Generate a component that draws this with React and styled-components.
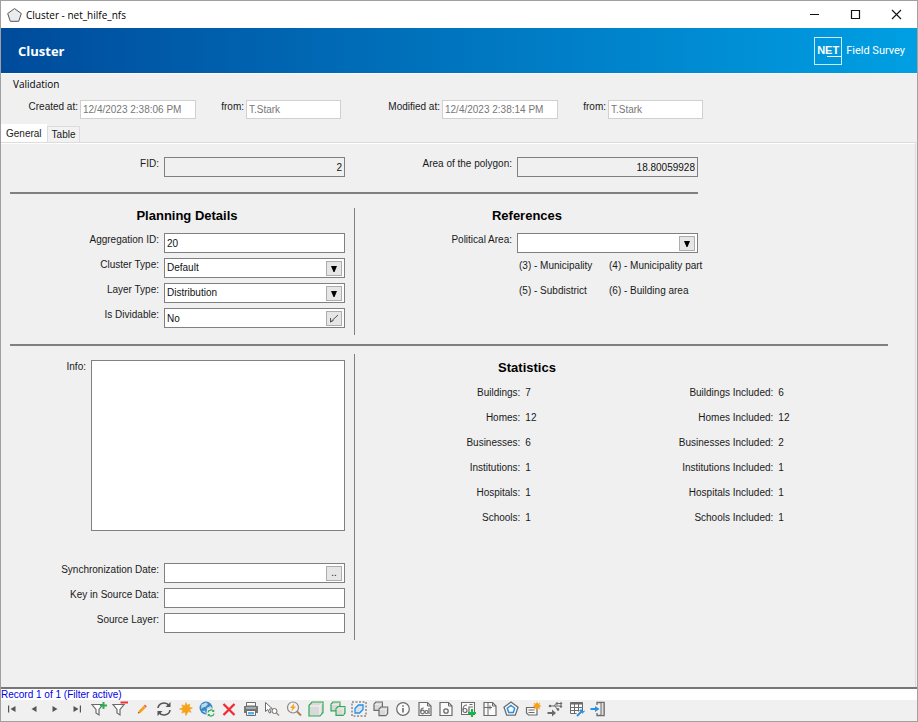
import React, { useState } from 'react'
import styled, { createGlobalStyle } from 'styled-components'

const GlobalStyle = createGlobalStyle`
    * {
        box-sizing: border-box;
    }
    body {
        margin: 0;
        background: #f0f0f0;
        color: #1a1a1a;
        font-family: "Liberation Sans", Arial, sans-serif;
        font-size: 10px;
        line-height: 12px;
    }
    button, input, select, textarea {
        margin: 0;
        padding: 0;
        border: none;
        border-radius: 0;
        outline: none;
        background: transparent;
        color: inherit;
        font: inherit;
    }
`

const gray = '#6b6b6b'
const green = '#2faa55'
const blue = '#2b8fe0'
const orange = '#f7a11b'

const Funnel = () => <path d="M2 4.5h11L9 9.5V15l-3-2V9.5z" fill="#fff" stroke={gray} strokeWidth="1.2" />
const Page = () => (
    <>
        <path d="M3 2.5h8.5l3.5 3.5v9.5H3z" fill="#fafafa" stroke={gray} strokeWidth="1.2" />
        <path d="M11.5 2.5V6H15" fill="none" stroke={gray} />
    </>
)
const Cube = ({ x, y, s, line, fill = '#d9d9d9' }) => (
    <g transform={`translate(${x} ${y}) scale(${s})`} stroke={line} strokeLinejoin="miter">
        <path d="M0 3.5L3 0h11v10.5L11 14H0z" fill={fill} strokeWidth={1.2 / s} />
        <path d="M1 4H11L13.2 1.2M11 4V13" fill="none" stroke="#f8f8f8" strokeWidth="1" />
    </g>
)
const Loop = ({ color, width }) => (
    <g fill="none" stroke={color} strokeWidth={width}>
        <path d="M3 8a6 5.5 0 0 1 11-2.5M15 10a6 5.5 0 0 1-11 2.5" />
        <path d="M15.5 2v5h-5zM2.5 16v-5h5z" fill={color} stroke="none" />
    </g>
)

const tools = [
    ['First record', <path d="M5 5.500h1.200v7H5zM12.500 6v6L7.500 9z" fill="#555" />],
    ['Previous record', <path d="M11.500 6v6L6.500 9z" fill="#555" />],
    ['Next record', <path d="M6.500 6v6L11.500 9z" fill="#555" />],
    ['Last record', <path d="M5.500 6v6L10.500 9zM11.800 5.500H13v7h-1.200z" fill="#555" />],
    ['Add filter', <><Funnel /><path d="M13.500 2v7M10 5.500h7" stroke={green} strokeWidth="2" /></>],
    ['Remove filter', <><Funnel /><path d="M9.500 2.500h7.500" stroke="#f0323c" strokeWidth="2" /></>],
    ['Edit', <><path d="M5 13.500l.8-2.700 5.200-5.200 1.900 1.900-5.200 5.200z" fill={orange} /><path d="M11 5.600l1-1 1.900 1.900-1 1z" fill="#e8555b" /><path d="M5 13.500l.5-1.700 1.200 1.200z" fill="#555" /></>],
    ['Refresh', <Loop color="#555" width="1.6" />],
    ['New', <path d="M9 2.500l1.200 2.800 2.700-1.200-.8 2.900 3.400 1-3 1.400 1.700 2.900-3-.7L9 15.500l-1.200-3.600-3 1.200 1.200-2.900-3.500-1.200 3.500-1.200-1.200-3 3 1.200z" fill={orange} stroke={orange} strokeWidth=".6" />],
    ['Web map', <><circle cx="8" cy="8" r="6.500" fill="#3a87c4" /><path d="M3.500 4.500L8 2.500l2 1.500-2 2.500-3 1-2 1.500zM8.500 8l4-2 1.500 2-2 2.500-3-.5zM4 11l3-.5 1 3z" fill="#b8dcec" /><rect x="8.500" y="8.500" width="9" height="9" rx="4" fill="#f0f0f0" /><g transform="translate(8.500 8.500) scale(.5)"><Loop color={green} width="2.500" /></g></>],
    ['Delete', <path d="M3.500 4l11 11M14.500 4l-11 11" stroke="#ef2b33" strokeWidth="2.300" />],
    ['Print', <><path d="M4.500 2.500h9V6h-9z" fill="#fff" stroke={gray} /><path d="M2 6h14v7H2z" fill="#777" /><path d="M4 8h10" stroke="#ddd" /><path d="M4.500 10.500h9v5h-9z" fill="#fff" stroke={gray} /><path d="M6 12h6v2.500H6z" fill="#5ab0ea" /></>],
    ['Identify', <><path d="M2.500 2.500v9l2.300-2 1.600 3.600 1.600-.8L6.400 9l3-.2z" fill="#fff" stroke={gray} /><circle cx="11.500" cy="11" r="2.500" fill="#fff" stroke={gray} /><path d="M13.300 12.800l2.700 2.700" stroke="#a88970" strokeWidth="1.500" /></>],
    ['Quick search', <><circle cx="8" cy="7.500" r="5.500" fill="#f4f4f4" stroke="#888" strokeWidth="1.200" /><path d="M9.500 3L5 8h2.500L6 12l5-5.500H8.500z" fill={orange} /><path d="M12 11.500l4 4" stroke="#a87f5c" strokeWidth="2" /></>],
    ['Feature', <Cube x={2} y={2} s={1} line={green} />],
    ['Copy feature', <><Cube x={2} y={2} s={0.64} line={green} /><Cube x={7} y={6.5} s={0.64} line={green} /></>],
    ['Select feature', <><rect x="2" y="2" width="14" height="14" fill="none" stroke="#555" strokeDasharray="2 1.5" /><path d="M5 8.500L8.500 5H13v4.500L9.500 13H5z" fill="#d5e4ee" stroke={blue} strokeWidth="1.300" /></>],
    ['Group', <><Cube x={2} y={2} s={0.6} line={gray} /><Cube x={7} y={7} s={0.62} line={gray} /></>],
    ['Info', <><circle cx="9" cy="9" r="6.300" fill="#fafafa" stroke={gray} strokeWidth="1.200" /><path d="M9 8v4.500M9 5.200v1.500" stroke={gray} strokeWidth="1.600" /></>],
    ['Report', <><Page /><g fill="none" stroke={gray} strokeWidth="1.200"><circle cx="6.500" cy="12" r="1.800" /><path d="M4.800 11.500c0-3 1-3.500 3-3.500" /><circle cx="10.500" cy="12" r="1.500" /><path d="M13 8v6" /></g></>],
    ['Object report', <><Page /><circle cx="9" cy="11" r="2.200" fill="none" stroke={gray} strokeWidth="1.300" /></>],
    ['Add view', <><rect x="2.500" y="2.500" width="13" height="12" fill="#fafafa" stroke={gray} /><g fill="none" stroke={gray} strokeWidth="1.200"><circle cx="6" cy="10.500" r="2" /><path d="M4 10C4 6 5 5 8 5M10 13V7h4M10.500 4.500h3" /></g><path d="M13 9v8M9 13h8" stroke="#17b84a" strokeWidth="2.200" /></>],
    ['Layout', <><Page /><path d="M7 2.500v13M3 7.500h8M9 5.500v4" fill="none" stroke={gray} /></>],
    ['Polygon', <><path d="M9 2l7 5.200-2.700 8H4.700L2 7.200z" fill="#fafafa" stroke={gray} strokeWidth="1.300" /><path d="M9 5.500l3.700 2.700-1.400 4.300H6.700L5.300 8.200z" fill="#fff" stroke={blue} strokeWidth="1.500" /></>],
    ['New label', <><path d="M2.500 7.500H13v7.500H4.500l-2-2z" fill="#fafafa" stroke={gray} strokeWidth="1.200" /><path d="M4.500 10h6M4.500 12.500h6" stroke={gray} /><path d="M13 1.500l1 2.200 2.300-.9-.9 2.200 2.100 1-2.100 1 .9 2.200-2.300-.9-1 2.200-1-2.200-2.300.9.900-2.200-2.100-1 2.100-1-.9-2.200 2.300.9z" fill={orange} /></>],
    ['Trace', <><path d="M1.500 13h5.500" stroke={gray} strokeWidth="2" /><path d="M6 9.500l4 3.500-4 3.500z" fill={gray} /><path d="M4 6h11M8 6l2-2.500h4M9 6l2 3h2" fill="none" stroke={gray} /><g fill={gray}><circle cx="4" cy="6" r="1.300" /><circle cx="11" cy="3.500" r="1.200" /><circle cx="15" cy="3.500" r="1.200" /><circle cx="15" cy="6.500" r="1.200" /><circle cx="12" cy="9.500" r="1.300" /></g></>],
    ['Table settings', <><path d="M2.500 2.500h12v11h-12z" fill="#fafafa" stroke={gray} /><path d="M2.500 3.500h12" stroke={gray} strokeWidth="2" /><path d="M2.500 7.500h12M2.500 10.500h12M6.500 3v10.500M10.500 3v10.500" stroke={gray} /><path d="M8.500 16.500l5-5" stroke="#f0f0f0" strokeWidth="4" /><path d="M9 16l5-5" stroke={blue} strokeWidth="1.800" /><path d="M13 8.500a2.500 2.500 0 0 0 .5 4 2.500 2.500 0 0 0 3.500-2l-2 .8-1.200-1.200z" fill={blue} /></>],
    ['Close form', <><path d="M8 5V2.500h7v13H8V13" fill="none" stroke={gray} strokeWidth="1.300" /><path d="M12 2.500h3v13h-3z" fill="#ddd" stroke={gray} /><path d="M1.500 9H7" stroke={blue} strokeWidth="2" /><path d="M6 6L10.500 9 6 12z" fill={blue} /></>],
]

const planning = [
    { id: 'aggregation', label: 'Aggregation ID:', value: '20' },
    { id: 'clusterType', label: 'Cluster Type:', options: ['Default'] },
    { id: 'layerType', label: 'Layer Type:', options: ['Distribution'] },
    { id: 'dividable', label: 'Is Dividable:', value: 'No', action: 'check' },
]

const source = [
    { id: 'syncDate', label: 'Synchronization Date:', value: '', action: 'dots' },
    { id: 'sourceKey', label: 'Key in Source Data:', value: '' },
    { id: 'sourceLayer', label: 'Source Layer:', value: '' },
]

const stats = [
    ['Buildings:', 7, 'Buildings Included:', 6],
    ['Homes:', 12, 'Homes Included:', 12],
    ['Businesses:', 6, 'Businesses Included:', 2],
    ['Institutions:', 1, 'Institutions Included:', 1],
    ['Hospitals:', 1, 'Hospitals Included:', 1],
    ['Schools:', 1, 'Schools Included:', 1],
]

const meta = [
    { id: 'createdAt', label: 'Created at:', value: '12/4/2023 2:38:06 PM' },
    { id: 'createdFrom', label: 'from:', value: 'T.Stark' },
    { id: 'modifiedAt', label: 'Modified at:', value: '12/4/2023 2:38:14 PM' },
    { id: 'modifiedFrom', label: 'from:', value: 'T.Stark' },
]

const Field = ({ id, label, value, options, action, readOnly, wide }) => (
    <FieldRow $wide={wide}>
        <FieldLabel htmlFor={id}>{label}</FieldLabel>
        <FieldBox $readOnly={readOnly}>
            {options ? (
                <>
                    <Select id={id}>
                        {options.map(option => <option key={option}>{option}</option>)}
                    </Select>
                    <SelectArrow aria-hidden="true">
                        <svg width="6" height="6" viewBox="0 0 6 6"><path d="M0 0h6L3.500 6h-1z" fill="#000" /></svg>
                    </SelectArrow>
                </>
            ) : (
                <Input id={id} defaultValue={value} readOnly={readOnly} $right={readOnly} />
            )}
            {action === 'check' && (
                <FieldButton type="button" aria-label="Toggle">
                    <svg width="10" height="9" viewBox="0 0 10 9"><path d="M1.500 4v4L9 1M1.500 8l3-1.500" fill="none" stroke="#555" /></svg>
                </FieldButton>
            )}
            {action === 'dots' && <FieldButton type="button">..</FieldButton>}
        </FieldBox>
    </FieldRow>
)

const App = () => {
    const [tab, setTab] = useState('General')

    return (
        <Window>
            <GlobalStyle />
            <TitleBar>
                <svg width="15" height="14" viewBox="0 0 15 14">
                    <path d="M7.500 .6L14.300 5.500 11.700 13.300H3.300L.7 5.500z" fill="#e9ebee" stroke="#555" />
                </svg>
                <WindowTitle>Cluster - net_hilfe_nfs</WindowTitle>
                <WindowButton type="button" aria-label="Minimize">
                    <svg width="11" height="11" viewBox="0 0 11 11"><path d="M1 5.500h9" stroke="#111" /></svg>
                </WindowButton>
                <WindowButton type="button" aria-label="Maximize">
                    <svg width="11" height="11" viewBox="0 0 11 11"><path d="M1.500 1.500h8v8h-8z" fill="none" stroke="#111" strokeWidth="1.2" /></svg>
                </WindowButton>
                <WindowButton type="button" aria-label="Close">
                    <svg width="11" height="11" viewBox="0 0 11 11"><path d="M1 1l9 9M10 1l-9 9" stroke="#111" strokeWidth="1.1" /></svg>
                </WindowButton>
            </TitleBar>
            <Header>
                <HeaderTitle>Cluster</HeaderTitle>
                <Brand>
                    <BrandBox>NET<BrandLine /></BrandBox>
                    Field Survey
                </Brand>
            </Header>
            <Menu>
                <MenuButton type="button">Validation</MenuButton>
            </Menu>
            <MetaRow>
                {meta.map(({ id, label, value }) => (
                    <React.Fragment key={id}>
                        <FieldLabel htmlFor={id}>{label}</FieldLabel>
                        <MetaInput id={id} defaultValue={value} readOnly />
                    </React.Fragment>
                ))}
            </MetaRow>
            <Tabs role="tablist">
                {['General', 'Table'].map(name => (
                    <Tab key={name} type="button" role="tab" aria-selected={tab === name} $active={tab === name} onClick={() => setTab(name)}>
                        {name}
                    </Tab>
                ))}
            </Tabs>
            <Panel>
                <Columns>
                    <Column $left>
                        <Field id="fid" label="FID:" value="2" readOnly />
                    </Column>
                    <Column>
                        <Field id="area" label="Area of the polygon:" value="18.80059928" readOnly wide />
                    </Column>
                </Columns>
                <Rule $short />
                <Columns>
                    <Column $left $divided>
                        <Heading $indent>Planning Details</Heading>
                        <Fields>
                            {planning.map(field => <Field key={field.id} {...field} />)}
                        </Fields>
                    </Column>
                    <Column>
                        <Heading>References</Heading>
                        <Field id="politicalArea" label="Political Area:" options={['']} wide />
                        <Notes>
                            <span>(3) - Municipality</span>
                            <span>(4) - Municipality part</span>
                            <span>(5) - Subdistrict</span>
                            <span>(6) - Building area</span>
                        </Notes>
                    </Column>
                </Columns>
                <Rule />
                <Columns>
                    <Column $left $divided>
                        <InfoRow>
                            <FieldLabel htmlFor="info">Info:</FieldLabel>
                            <TextArea id="info" />
                        </InfoRow>
                        <Fields>
                            {source.map(field => <Field key={field.id} {...field} />)}
                        </Fields>
                    </Column>
                    <Column>
                        <Heading $low>Statistics</Heading>
                        <Stats>
                            {stats.map(([label, count, includedLabel, included]) => (
                                <React.Fragment key={label}>
                                    <Stat><dt>{label}</dt><dd>{count}</dd></Stat>
                                    <Stat><dt>{includedLabel}</dt><dd>{included}</dd></Stat>
                                </React.Fragment>
                            ))}
                        </Stats>
                    </Column>
                </Columns>
            </Panel>
            <Status>Record 1 of 1 (Filter active)</Status>
            <Toolbar>
                {tools.map(([name, icon]) => (
                    <ToolButton key={name} type="button" aria-label={name} title={name}>
                        <svg width="18" height="18" viewBox="0 0 18 18">{icon}</svg>
                    </ToolButton>
                ))}
            </Toolbar>
        </Window>
    )
}

const Window = styled.div`
    display: flex;
    flex-flow: column;
    min-height: 100vh;
    border: 1px solid #a0a0a0;
`

const TitleBar = styled.div`
    display: flex;
    align-items: center;
    height: 27px;
    padding-left: 6px;
    background: white;
`

const WindowTitle = styled.span`
    flex: 1;
    margin-left: 4px;
    color: black;
    font-family: "Open Sans", sans-serif;
    font-size: 10px;
`

const WindowButton = styled.button`
    display: flex;
    align-items: center;
    justify-content: center;
    width: 41px;
    height: 27px;
`

const Header = styled.header`
    display: flex;
    align-items: center;
    justify-content: space-between;
    height: 46px;
    padding: 0 12px 0 17px;
    border-bottom: 1px solid #fafafa;
    background: linear-gradient(90deg, #004b9b, #009fe3);
    color: white;
`

const HeaderTitle = styled.h1`
    margin: 0;
    font: bold 13px/16px "Open Sans", sans-serif;
`

const Brand = styled.div`
    display: flex;
    align-items: center;
    gap: 4px;
    font-family: Roboto, sans-serif;
    font-size: 11px;
`

const BrandBox = styled.div`
    display: flex;
    flex-flow: column;
    align-items: center;
    justify-content: center;
    width: 28px;
    height: 28px;
    border: 1px solid #cdeafb;
    font: bold 11px/12px "Liberation Sans", sans-serif;
`

const BrandLine = styled.span`
    align-self: flex-end;
    width: 14px;
    height: 1px;
    background: white;
`

const Menu = styled.div`
    display: flex;
    height: 26px;
    padding: 2px 12px;
`

const MenuButton = styled.button`
    height: 16px;
    color: black;
    font-family: "Open Sans", sans-serif;
`

const MetaRow = styled.div`
    display: grid;
    grid-template-columns: 77px 116px 46px 95px 97px 116px 46px 95px;
    gap: 2px;
    margin-bottom: 6px;
`

const FieldLabel = styled.label`
    height: 14px;
    line-height: 14px;
    text-align: right;
    white-space: nowrap;
`

const MetaInput = styled.input`
    width: 100%;
    height: 19px;
    padding: 0 2px;
    border: 1px solid #d0d0d0;
    background: white;
    color: #777;
`

const Tabs = styled.div`
    display: flex;
    align-items: flex-end;
    height: 17px;
`

const Tab = styled.button`
    height: ${({ $active }) => $active ? '18px' : '16px'};
    padding: 0 4px;
    border: 1px solid ${({ $active }) => $active ? 'white' : '#dcdcdc'};
    border-bottom: none;
    background: ${({ $active }) => $active ? 'white' : '#f2f2f2'};
`

const Panel = styled.main`
    flex: 1;
    margin-right: 1px;
    padding: 14px 27px 0 9px;
    border-top: 1px solid #dcdcdc;
    border-right: 1px solid #dcdcdc;
    box-shadow: inset 0 1px white;
`

const Columns = styled.div`
    display: grid;
    grid-template-columns: 345px 1fr;
`

const Column = styled.section`
    padding-right: ${({ $left, $divided }) => $left ? ($divided ? '9px' : '10px') : '0'};
    border-right: ${({ $divided }) => $divided ? '1px solid #808080' : 'none'};
`

const Rule = styled.hr`
    height: 2px;
    margin: ${({ $short }) => $short ? '15px 190px 14px 0' : '9px 0 8px'};
    border: none;
    background: #808080;
`

const Heading = styled.h2`
    width: 344px;
    height: ${({ $low }) => $low ? '26px' : '25px'};
    margin: 0;
    padding-top: ${({ $low }) => $low ? '6px' : '0'};
    padding-left: ${({ $indent }) => $indent ? '10px' : '0'};
    color: black;
    font-size: 13px;
    line-height: 16px;
    text-align: center;
`

const Fields = styled.div`
    display: grid;
    gap: 5px;
    padding-bottom: 7px;
`

const FieldRow = styled.div`
    display: grid;
    grid-template-columns: ${({ $wide }) => $wide ? '157px' : '1fr'} 181px;
    gap: 5px;
`

const FieldBox = styled.div`
    position: relative;
    display: flex;
    align-items: center;
    height: 20px;
    padding: 0 2px;
    border: 1px solid #808080;
    background: ${({ $readOnly }) => $readOnly ? '#f0f0f0' : 'white'};
`

const Input = styled.input`
    flex: 1;
    min-width: 0;
    height: 16px;
    color: #111;
    text-align: ${({ $right }) => $right ? 'right' : 'left'};
`

const Select = styled.select`
    flex: 1;
    height: 16px;
    appearance: none;
    color: #111;
`

const SelectArrow = styled.span`
    position: absolute;
    top: 2px;
    right: 2px;
    display: flex;
    align-items: center;
    justify-content: center;
    width: 16px;
    height: 15px;
    border: 1px solid #adadad;
    background: #e6e6e6;
    pointer-events: none;
`

const FieldButton = styled.button`
    display: flex;
    align-items: center;
    justify-content: center;
    width: 16px;
    height: 15px;
    border: 1px solid #adadad;
    background: #e6e6e6;
`

const Notes = styled.div`
    display: grid;
    grid-template-columns: 90px auto;
    padding-left: 164px;
    line-height: 25px;
`

const InfoRow = styled.div`
    display: grid;
    grid-template-columns: 1fr 254px;
    gap: 5px;
    padding: 6px 0 32px;
`

const TextArea = styled.textarea`
    height: 171px;
    padding: 2px;
    border: 1px solid #808080;
    background: white;
    resize: none;
`

const Stats = styled.dl`
    display: grid;
    grid-template-columns: 1fr 1fr;
    margin: 0;
    padding-right: 27px;
    line-height: 25px;
`

const Stat = styled.div`
    display: grid;
    grid-template-columns: 2fr 1fr;
    gap: 5px;
    dt {
        text-align: right;
    }
    dd {
        margin: 0;
    }
`

const Status = styled.div`
    height: 13px;
    border-top: 2px solid #777;
    background: white;
    color: #0000e6;
    line-height: 12px;
`

const Toolbar = styled.div`
    display: flex;
    width: 100%;
    max-width: 608px;
    height: 21px;
`

const ToolButton = styled.button`
    display: flex;
    flex: 1;
    align-items: flex-start;
    justify-content: center;
    min-width: 0;
`

export default App
